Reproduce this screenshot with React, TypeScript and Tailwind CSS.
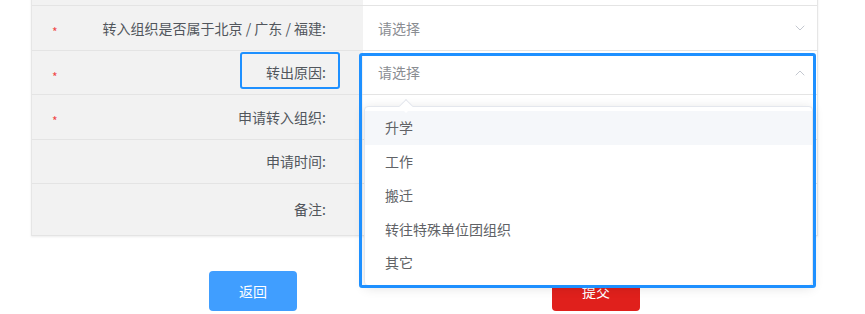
import { ChevronDown, ChevronUp } from 'lucide-react'

const font = { fontFamily: '"Noto Sans CJK SC", "Noto Sans", sans-serif' }

const rows = [
  { label: '', required: false, h: 'h-[45px]', value: null },
  { label: '转入组织是否属于北京 / 广东 / 福建:', required: true, h: 'h-[45px]', value: 'closed' },
  { label: '转出原因:', required: true, h: 'h-[44px]', value: 'open' },
  { label: '申请转入组织:', required: true, h: 'h-[45px]', value: null },
  { label: '申请时间:', required: false, h: 'h-[44px]', value: null },
  { label: '备注:', required: false, h: 'h-[52px]', value: null },
]

const options = ['升学', '工作', '搬迁', '转往特殊单位团组织', '其它']

export default function App() {
  return (
    <div
      className="relative h-[314px] w-[865px] overflow-hidden bg-white text-[14px]"
      style={font}
    >
      {/* form table */}
      <div className="ml-[31px] mt-[-39px] w-[787px] border-x border-[#e6e6e6] shadow-[0_1px_2px_rgba(0,0,0,0.08)]">
        {rows.map((row, i) => (
          <div key={i} className={`flex ${row.h} border-b border-[#e4e4e4]`}>
            <div className="flex w-[331px] shrink-0 items-center bg-[#f2f2f2] pl-[20px] pr-[37px]">
              {row.required && (
                <span className="translate-y-[4px] text-[12px] leading-none text-[#f04848]">*</span>
              )}
              <span className="ml-auto text-[#51565c]">{row.label}</span>
            </div>
            <div className="flex flex-1 items-center bg-white pl-[15px] pr-[9px]">
              {row.value && (
                <>
                  <span className="text-[#8a8d92]">请选择</span>
                  <span className="ml-auto text-[#c0c4cc]">
                    {row.value === 'open' ? (
                      <ChevronUp className="size-[16px]" strokeWidth={1.4} />
                    ) : (
                      <ChevronDown className="size-[16px]" strokeWidth={1.4} />
                    )}
                  </span>
                </>
              )}
            </div>
          </div>
        ))}
      </div>

      {/* actions */}
      <div className="mt-[35px] flex pl-[209px]">
        <button className="h-[40px] w-[88px] rounded-[4px] bg-[#409eff] text-white">返回</button>
        <button className="ml-[255px] h-[40px] w-[88px] rounded-[4px] bg-[#e0201c] text-white">
          提交
        </button>
      </div>

      {/* dropdown */}
      <div className="absolute left-[364px] top-[106px] z-10 w-[449px] rounded-[4px] border border-[#e4e7ed] bg-white pb-[5px] pt-[4px] shadow-[0_2px_12px_rgba(0,0,0,0.12)]">
        <span className="absolute left-[36px] top-[-6px] size-[10px] rotate-45 border-l border-t border-[#e4e7ed] bg-white" />
        {options.map((opt, i) => (
          <div
            key={opt}
            className={`flex h-[33.75px] items-center pl-[20px] text-[#606266] ${i === 0 ? 'bg-[#f5f7fa]' : ''}`}
          >
            {opt}
          </div>
        ))}
      </div>

      {/* annotation highlights */}
      <div className="absolute left-[240px] top-[52px] z-20 h-[37px] w-[100px] rounded-[3px] border-2 border-[#1e90ff]" />
      <div className="absolute left-[359px] top-[53px] z-20 h-[235px] w-[457px] rounded-[3px] border-[3px] border-[#1e90ff]" />
    </div>
  )
}
